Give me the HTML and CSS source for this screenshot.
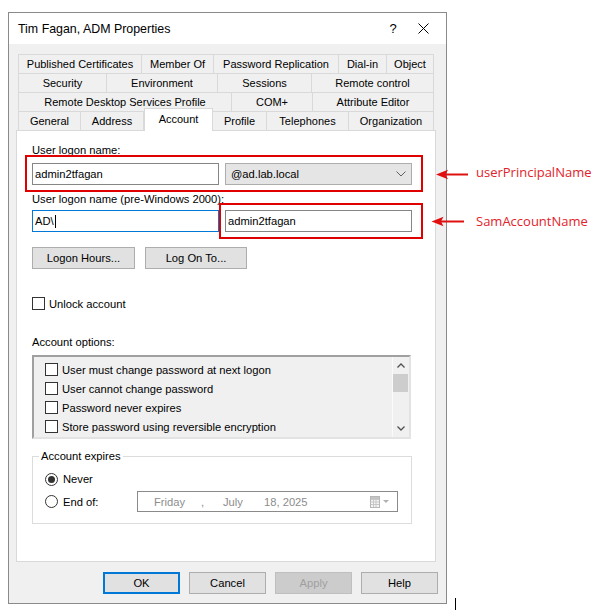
FILE: index.html
```html
<!DOCTYPE html>
<html>
<head>
<meta charset="utf-8">
<link rel="stylesheet" href="styles.css">
</head>
<body>
<div class="stage">
  <div class="window">
    <div class="titlebar">
      <span class="title">Tim Fagan, ADM Properties</span>
      <span class="help">?</span>
      <span class="close"><svg width="11" height="11" viewBox="0 0 11 11"><path d="M0.5 0.5 L10.5 10.5 M10.5 0.5 L0.5 10.5" stroke="#000" stroke-width="1" fill="none"/></svg></span>
    </div>
    <div class="tabs">
      <div class="tabrow r1">
        <div class="tab">Published Certificates</div>
        <div class="tab">Member Of</div>
        <div class="tab">Password Replication</div>
        <div class="tab">Dial-in</div>
        <div class="tab">Object</div>
      </div>
      <div class="tabrow r2">
        <div class="tab">Security</div>
        <div class="tab">Environment</div>
        <div class="tab">Sessions</div>
        <div class="tab">Remote control</div>
      </div>
      <div class="tabrow r3">
        <div class="tab">Remote Desktop Services Profile</div>
        <div class="tab">COM+</div>
        <div class="tab">Attribute Editor</div>
      </div>
      <div class="tabrow r4">
        <div class="tab">General</div>
        <div class="tab">Address</div>
        <div class="tab active">Account</div>
        <div class="tab">Profile</div>
        <div class="tab">Telephones</div>
        <div class="tab">Organization</div>
      </div>
    </div>
    <div class="panel">
      <div class="label">User logon name:</div>
      <div class="pair">
        <div class="edit">admin2tfagan</div>
        <div class="combo"><span>@ad.lab.local</span><svg class="chev" width="10" height="6" viewBox="0 0 10 6"><path d="M0.5 0.5 L5 5 L9.5 0.5" stroke="#606060" stroke-width="1" fill="none"/></svg></div>
      </div>
      <div class="label l2">User logon name (pre-Windows 2000):</div>
      <div class="pair p2">
        <div class="edit focus">AD\<span class="caret"></span></div>
        <div class="edit">admin2tfagan</div>
      </div>
      <div class="btnrow">
        <div class="btn w1">Logon Hours...</div>
        <div class="btn w2">Log On To...</div>
      </div>
      <div class="check unlock"><span class="cb"></span><span>Unlock account</span></div>
      <div class="label l3">Account options:</div>
      <div class="listbox">
        <div class="items">
          <div class="check item"><span class="cb"></span><span>User must change password at next logon</span></div>
          <div class="check item"><span class="cb"></span><span>User cannot change password</span></div>
          <div class="check item"><span class="cb"></span><span>Password never expires</span></div>
          <div class="check item"><span class="cb"></span><span>Store password using reversible encryption</span></div>
        </div>
        <div class="scroll">
          <div class="sbtn"><svg width="8" height="5" viewBox="0 0 8 5"><path d="M0.5 4.5 L4 1 L7.5 4.5" stroke="#505050" stroke-width="1.3" fill="none"/></svg></div>
          <div class="thumb"></div>
          <div class="track"></div>
          <div class="sbtn"><svg width="8" height="5" viewBox="0 0 8 5"><path d="M0.5 0.5 L4 4 L7.5 0.5" stroke="#505050" stroke-width="1.3" fill="none"/></svg></div>
        </div>
      </div>
      <fieldset class="expires">
        <legend>Account expires</legend>
        <div class="exp-body">
          <div class="radio-row"><span class="rb on"></span><span>Never</span></div>
          <div class="end-row">
            <div class="radio-row"><span class="rb"></span><span>End of:</span></div>
            <div class="date">
              <span class="d1">Friday</span><span class="d2">,</span><span class="d3">July</span><span class="d4">18, 2025</span>
              <svg class="cal" width="20" height="12" viewBox="0 0 20 12">
                <rect x="0.5" y="0.5" width="9" height="11" fill="#f4f4f4" stroke="#b8b8b8"/>
                <path d="M1 3.5 H9 M1 6 H9 M1 8.5 H9 M3.5 3 V11 M6 3 V11" stroke="#c8c8c8" stroke-width="1"/>
                <rect x="1" y="1" width="8" height="2" fill="#c4c4c4"/>
                <path d="M13 4 L19 4 L16 7 Z" fill="#b0b0b0"/>
              </svg>
            </div>
          </div>
        </div>
      </fieldset>
    </div>
    <div class="actions">
      <div class="btn act default">OK</div>
      <div class="btn act">Cancel</div>
      <div class="btn act disabled">Apply</div>
      <div class="btn act">Help</div>
    </div>
  </div>

  <div class="redbox box1"></div>
  <div class="redbox box2"></div>
  <svg class="arrows" width="606" height="615" viewBox="0 0 606 615">
    <path d="M436 174.5 L448 169.8 L445.5 174.5 L448 179.2 Z" fill="#e01010"/>
    <path d="M444 174.5 H468" stroke="#e01010" stroke-width="2"/>
    <path d="M431.5 221.5 L443.5 216.8 L441 221.5 L443.5 226.2 Z" fill="#e01010"/>
    <path d="M439 221.5 H464" stroke="#e01010" stroke-width="2"/>
  </svg>
  <span class="note n1">userPrincipalName</span>
  <span class="note n2">SamAccountName</span>
  <span class="cursor"></span>
</div>
</body>
</html>
```

FILE: styles.css
```css
* { box-sizing: border-box; }
html, body { margin: 0; padding: 0; background: #fff; }
body { font-family: "Liberation Sans", Arial, sans-serif; font-size: 11.2px; color: #000; }

.stage { position: relative; width: 606px; height: 615px; overflow: hidden; }

.window {
  margin: 12px 0 0 8px;
  width: 439px;
  height: 592px;
  border: 1px solid #8a8a8a;
  background: #f0f0f0;
}

.titlebar {
  height: 31px;
  background: #fff;
  display: flex;
  align-items: center;
  padding: 0 8px 0 9px;
}
.title { font-size: 12.4px; }
.help { margin-left: auto; width: 30px; text-align: center; font-size: 13px; }
.close { width: 30px; display: flex; justify-content: center; align-items: center; }

.tabs { margin: 10px 0 0 9px; width: 416px; }
.tabrow { display: grid; grid-template-rows: 19px; }
.r1 { grid-template-columns: 124px 72px 125px 48px 47px; }
.r2 { grid-template-columns: 89px 111px 94px 122px; }
.r3 { grid-template-columns: 214px 81px 121px; }
.r4 { grid-template-columns: 63px 63px 69px 54px 82px 85px; }
.tab {
  height: 19px;
  border-top: 1px solid #d9d9d9;
  border-right: 1px solid #d9d9d9;
  display: flex;
  align-items: center;
  justify-content: center;
  white-space: nowrap;
  font-size: 11px;
  background: #f0f0f0;
}
.tab:first-child { border-left: 1px solid #d9d9d9; }
.tab.active {
  position: relative;
  z-index: 2;
  margin-top: -3px;
  height: 23px;
  background: #fff;
  border-left: 1px solid #d9d9d9;
  padding-bottom: 3px;
}

.panel {
  margin-left: 7px;
  width: 420px;
  height: 432px;
  border: 1px solid #d9d9d9;
  background: #fff;
  padding: 13px 0 0 15px;
}
.label { line-height: 13px; height: 13px; white-space: nowrap; }
.l2 { margin-top: 8px; }
.l3 { margin-top: 26px; }

.pair { display: flex; gap: 6px; margin-top: 6px; height: 22px; }
.p2 { margin-top: 4px; }
.edit {
  width: 187px;
  height: 22px;
  border: 1px solid #868686;
  background: #fff;
  padding-left: 2px;
  display: flex;
  align-items: center;
}
.edit.focus { border-color: #0078d7; }
.caret { display: inline-block; width: 1px; height: 13px; background: #000; margin-left: 1px; }
.combo {
  width: 187px;
  height: 22px;
  border: 1px solid #adadad;
  background: #e5e5e5;
  padding: 0 5px 0 5px;
  display: flex;
  align-items: center;
}
.chev { margin-left: auto; margin-right: 0; }

.btn {
  height: 22px;
  border: 1px solid #adadad;
  background: #e1e1e1;
  display: flex;
  align-items: center;
  justify-content: center;
  white-space: nowrap;
}
.btnrow { display: flex; gap: 10px; margin-top: 15px; }
.w1 { width: 103px; }
.w2 { width: 102px; }

.check { display: flex; align-items: center; gap: 4px; white-space: nowrap; }
.cb { width: 13px; height: 13px; border: 1px solid #333; background: #fff; flex: none; }
.unlock { margin-top: 28px; height: 13px; }

.listbox {
  margin-top: 6px;
  width: 379px;
  height: 84px;
  border: 2px solid;
  border-color: #a0a0a0 #e3e3e3 #e3e3e3 #a0a0a0;
  background: #f0f0f0;
  display: flex;
}
.items { flex: 1; padding: 3px 0 0 11px; }
.item { height: 19px; }
.scroll {
  width: 17px;
  border-left: 1px solid #fafafa;
  display: flex;
  flex-direction: column;
}
.sbtn { height: 17px; display: flex; align-items: center; justify-content: center; flex: none; }
.thumb { height: 18px; background: #cdcdcd; margin: 0 1px 0 0; flex: none; }
.track { flex: 1; }

.expires {
  margin: 11px 0 0 0;
  width: 380px;
  border: 1px solid #dcdcdc;
  padding: 0;
  min-width: 0;
}
.expires legend { margin-left: 6px; padding: 0 2px; line-height: 13px; }
.exp-body { padding: 9px 0 11px 12px; }
.radio-row { display: flex; align-items: center; gap: 5px; height: 14px; white-space: nowrap; }
.rb {
  width: 13px;
  height: 13px;
  border: 1px solid #333;
  border-radius: 50%;
  background: #fff;
  flex: none;
  display: flex;
  align-items: center;
  justify-content: center;
}
.rb.on::after { content: ""; width: 7px; height: 7px; border-radius: 50%; background: #333; }
.end-row { display: grid; grid-template-columns: 92px 261px; align-items: center; margin-top: 5px; height: 21px; }
.date {
  height: 21px;
  border: 1px solid #8a8a8a;
  background: #fff;
  color: #8d8d8d;
  display: flex;
  align-items: center;
  padding: 0 7px 0 16px;
  white-space: nowrap;
}
.d1 { width: 47px; }
.d2 { width: 22px; }
.d3 { width: 41px; }
.cal { margin-left: auto; }

.actions {
  display: flex;
  justify-content: flex-end;
  gap: 9px;
  margin-top: 10px;
  padding-right: 8px;
}
.act { width: 77px; }
.default { border: 2px solid #0078d7; }
.disabled { background: #cccccc; border-color: #bfbfbf; color: #a0a0a0; }

.redbox { position: absolute; border: 2px solid #e00000; }
.box1 { left: 25px; top: 155px; width: 398px; height: 37px; }
.box2 { left: 219px; top: 203px; width: 204px; height: 36px; }
.arrows { position: absolute; left: 0; top: 0; pointer-events: none; }
.note {
  position: absolute;
  left: 476px;
  font-family: "Open Sans", "Liberation Sans", sans-serif;
  font-size: 13px;
  line-height: 16px;
  color: #e2222a;
  white-space: nowrap;
}
.n1 { top: 164px; }
.n2 { top: 213px; }
.cursor { position: absolute; left: 455px; top: 598px; width: 1px; height: 12px; background: #000; }
```
